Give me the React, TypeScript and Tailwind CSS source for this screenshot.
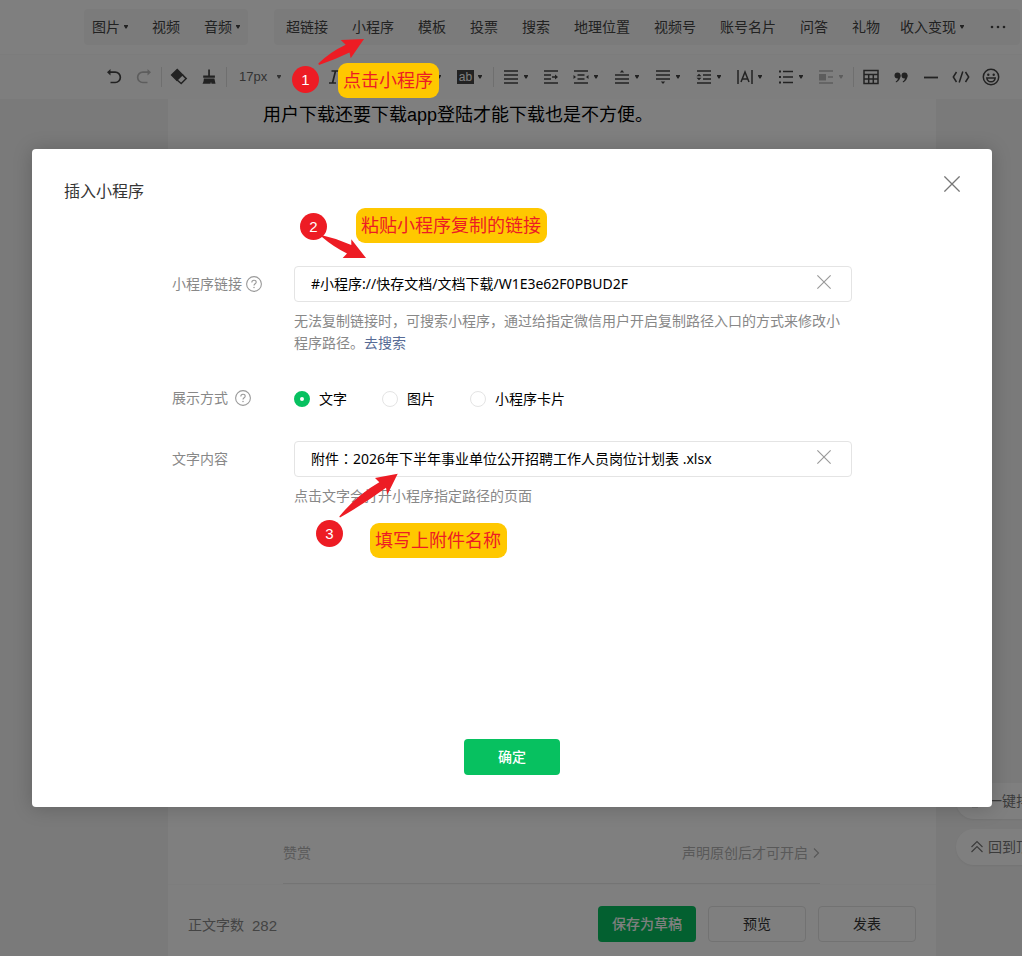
import { useState } from "react";
import type { ReactNode } from "react";

type MenuItem = { label: string; menu?: boolean };

const mediaItems: MenuItem[] = [
  { label: "图片", menu: true },
  { label: "视频" },
  { label: "音频", menu: true },
];

const insertItems: MenuItem[] = [
  { label: "超链接" },
  { label: "小程序" },
  { label: "模板" },
  { label: "投票" },
  { label: "搜索" },
  { label: "地理位置" },
  { label: "视频号" },
  { label: "账号名片" },
  { label: "问答" },
  { label: "礼物" },
  { label: "收入变现", menu: true },
];

function Caret() {
  return (
    <svg viewBox="0 0 4 4" className="h-1 w-1 shrink-0" fill="currentColor" aria-hidden="true">
      <path d="M0 0h4v1L2.500 3.500h-1L0 1z" />
    </svg>
  );
}

function MenuButton({ label, menu }: MenuItem) {
  return (
    <button
      type="button"
      className={
        menu
          ? "flex h-9 shrink-0 items-center gap-1 px-2 whitespace-nowrap"
          : "flex h-9 shrink-0 items-center px-3 whitespace-nowrap"
      }
    >
      {label}
      {menu && <Caret />}
    </button>
  );
}

function Icon({ children }: { children: ReactNode }) {
  return (
    <svg
      viewBox="0 0 18 18"
      className="h-[18px] w-[18px] shrink-0"
      fill="none"
      stroke="currentColor"
      strokeWidth="1.5"
      aria-hidden="true"
    >
      {children}
    </svg>
  );
}

function Tool({ name, muted, children }: { name: string; muted?: boolean; children: ReactNode }) {
  return (
    <button
      type="button"
      aria-label={name}
      className={
        muted
          ? "flex h-9 w-[30px] shrink-0 items-center justify-center text-[#bbbbbb]"
          : "flex h-9 w-[30px] shrink-0 items-center justify-center"
      }
    >
      <Icon>{children}</Icon>
    </button>
  );
}

function ToolMenu({
  name,
  muted,
  narrow,
  children,
}: {
  name: string;
  muted?: boolean;
  narrow?: boolean;
  children: ReactNode;
}) {
  const width = narrow ? "w-10" : "w-[41px]";
  const color = muted ? "text-[#bbbbbb]" : "";
  return (
    <button
      type="button"
      aria-label={name}
      className={`flex h-9 shrink-0 items-center gap-1 pl-1.5 ${width} ${color}`}
    >
      <Icon>{children}</Icon>
      <Caret />
    </button>
  );
}

function Separator() {
  return <span className="mx-0.5 h-5 w-px shrink-0 bg-[#dedede]" />;
}

function Cross({ className }: { className: string }) {
  return (
    <svg viewBox="0 0 16 16" className={className} fill="none" stroke="currentColor" aria-hidden="true">
      <path d="M.4.4l15.2 15.2M15.6.4L.4 15.6" strokeWidth="1.3" />
    </svg>
  );
}

function Help() {
  return (
    <button type="button" aria-label="帮助" className="text-[#9a9a9a]">
      <svg viewBox="0 0 16 16" className="h-4 w-4" fill="none" stroke="currentColor" aria-hidden="true">
        <circle cx="8" cy="8" r="7.4" strokeWidth="1.1" />
        <path d="M5.800 6.400C5.800 5 6.700 4.300 8 4.300s2.200.8 2.200 1.900c0 1.500-2.200 1.600-2.200 3.300" strokeWidth="1.100" />
        <circle cx="8" cy="11.400" r=".75" fill="currentColor" stroke="none" />
      </svg>
    </button>
  );
}

function StepBadge({ children }: { children: ReactNode }) {
  return (
    <span className="flex h-[27px] w-[27px] items-center justify-center rounded-full bg-[#ed1c24] text-[15px] leading-none text-white">
      {children}
    </span>
  );
}

function StepNote({ children }: { children: ReactNode }) {
  return (
    <span className="flex h-[35px] items-center rounded-[9px] bg-[#ffc800] pr-1.5 pl-[5px] text-lg whitespace-nowrap text-[#ed1c24]">
      {children}
    </span>
  );
}

function EditorToolbar() {
  return (
    <header className="shrink-0 bg-white text-sm text-[#444444]">
      <div className="flex h-[54px] items-center gap-[26px] pr-0.5 pl-[84px]">
        <div className="flex shrink-0 gap-1 rounded bg-[#f7f7f7]">
          {mediaItems.map((item) => (
            <MenuButton key={item.label} {...item} />
          ))}
        </div>
        <div className="flex flex-1 rounded bg-[#f7f7f7]">
          {insertItems.map((item) => (
            <MenuButton key={item.label} {...item} />
          ))}
          <button type="button" aria-label="更多" className="ml-auto flex h-9 items-center px-3.5">
            <svg viewBox="0 0 16 4" className="h-1 w-4" fill="currentColor" aria-hidden="true">
              <circle cx="2" cy="2" r="1.3" />
              <circle cx="8" cy="2" r="1.3" />
              <circle cx="14" cy="2" r="1.3" />
            </svg>
          </button>
        </div>
      </div>
      <div className="flex h-[45px] items-center border-t border-[#f8f8f8] bg-[#fdfdfd] pl-[99px]">
        <Tool name="撤销">
          <path d="M5.500 1L2 4.200l3.500 3.300z" fill="currentColor" stroke="none" />
          <path d="M4 4.200h6.200a5 5 0 010 10.300H5.500" strokeWidth="1.700" />
        </Tool>
        <Tool name="重做" muted>
          <path d="M12.500 1L16 4.200l-3.500 3.300z" fill="currentColor" stroke="none" />
          <path d="M14 4.200H7.800a5 5 0 000 10.300h4.700" strokeWidth="1.700" />
        </Tool>
        <Separator />
        <Tool name="清除格式">
          <path d="M7.200 1.500l5.200 5.200-5.600 5.600L1.600 7z" fill="currentColor" />
          <path d="M12.200 6.600l4 4-5 5-4.400-3.800" />
        </Tool>
        <Tool name="格式刷">
          <path d="M8.200 1.500h1.700V7.500h5v2.200H3.200V7.500h5z" fill="currentColor" stroke="none" />
          <path d="M3.800 10.500h10.600L15.500 15.800h-4l-.5-2-.5 2H2.500C3.500 14 3.800 12.500 3.800 10.500z" fill="currentColor" stroke="none" />
        </Tool>
        <Separator />
        <button type="button" className="flex h-9 w-[60px] shrink-0 items-center justify-between pr-2 pl-2.5 text-[13px] text-[#666666]">
          17px
          <Caret />
        </button>
        <Tool name="加粗">
          <path d="M5 3h5a3 3 0 010 6H5zM5 9h6a3 3 0 010 6H5z" strokeWidth="2" />
        </Tool>
        <Tool name="斜体">
          <path d="M6.500 3h7M4 15h7M10.500 3l-3 12" strokeWidth="1.700" />
        </Tool>
        <Tool name="下划线">
          <path d="M5 2v6a4 4 0 008 0V2M4 16h10" />
        </Tool>
        <Tool name="删除线">
          <path d="M2 9h14M13 5C12 2 5 2 5 6M5 12c1 4 8 4 8 0" />
        </Tool>
        <ToolMenu name="字体颜色">
          <path d="M4 12L9 2l5 10M6 9h6M2 16h14" />
        </ToolMenu>
        <button type="button" aria-label="背景色" className="flex h-9 w-[41px] shrink-0 items-center gap-1 pl-[7px]">
          <span className="flex h-3.5 w-[17px] items-center justify-center bg-[#444444] text-xs leading-none text-white">
            ab
          </span>
          <Caret />
        </button>
        <Separator />
        <ToolMenu name="对齐" narrow>
          <path d="M2 3h14M2 7h14M2 11h14M2 15h14" />
        </ToolMenu>
        <Tool name="首行缩进">
          <path d="M2 3h14M2 7h7M2 11h7M2 15h14M10 9h4" />
          <path d="M13 6.500L16 9l-3 2.500z" fill="currentColor" stroke="none" />
        </Tool>
        <ToolMenu name="两端缩进">
          <path d="M2 3h14M5.500 7h7M5.500 11h7M2 15h14" />
          <path d="M1.500 7L4 9l-2.500 2zM16.500 7L14 9l2.500 2z" fill="currentColor" stroke="none" />
        </ToolMenu>
        <ToolMenu name="段前距">
          <path d="M2 7h14M2 11h14M2 15h14" />
          <path d="M6.800 4.500L9 2l2.200 2.500z" fill="currentColor" stroke="none" />
        </ToolMenu>
        <ToolMenu name="段后距">
          <path d="M2 3h14M2 7h14M2 11h14" />
          <path d="M6.800 13.500L9 16l2.200-2.500z" fill="currentColor" stroke="none" />
        </ToolMenu>
        <ToolMenu name="行间距">
          <path d="M2 3h14M8 7h8M8 11h8M2 15h14" />
          <path d="M1.500 8.300L4 5.800l2.500 2.500zM1.500 9.700L4 12.200l2.500-2.500z" fill="currentColor" stroke="none" />
        </ToolMenu>
        <ToolMenu name="字间距">
          <path d="M2 2v14M16 2v14M5 14l4-10 4 10M6.300 11h5.400" />
        </ToolMenu>
        <ToolMenu name="列表" narrow>
          <path d="M6 3.500h10M6 9h10M6 14.500h10" />
          <path d="M2 3.500h2M2 9h2M2 14.500h2" strokeWidth="2" />
        </ToolMenu>
        <ToolMenu name="浮动" muted narrow>
          <path d="M2 3h14M11 9h5M2 15h14" />
          <path d="M2 6h7v6.500H2z" fill="currentColor" stroke="none" />
        </ToolMenu>
        <Separator />
        <Tool name="表格">
          <path d="M2 2.500h14v13H2zM2 6.500h14M2 11h14M6.700 6.500v9M11.300 6.500v9" />
        </Tool>
        <Tool name="引用">
          <g fill="currentColor" stroke="none">
            <circle cx="5.500" cy="7.500" r="3" />
            <circle cx="12.500" cy="7.500" r="3" />
            <path d="M8.500 7c.2 3.500-1.500 6.200-4.500 7.500l-.3-1c1.500-.8 2.500-2.500 2.300-4zM15.500 7c.2 3.500-1.500 6.200-4.500 7.500l-.3-1c1.500-.8 2.500-2.500 2.300-4z" />
          </g>
        </Tool>
        <Tool name="分隔线">
          <path d="M2 9.500h14" strokeWidth="1.800" />
        </Tool>
        <Tool name="代码">
          <path d="M4.500 4L1.300 9l3.200 5M13.500 4l3.200 5-3.200 5M10.800 3.500l-3.600 11" strokeWidth="1.500" />
        </Tool>
        <Tool name="表情">
          <circle cx="9" cy="9" r="7.700" />
          <circle cx="6.300" cy="6.700" r="1.200" fill="currentColor" stroke="none" />
          <circle cx="11.700" cy="6.700" r="1.200" fill="currentColor" stroke="none" />
          <path d="M4.800 10h8.400c-.3 2.500-2 3.800-4.200 3.800S5.100 12.500 4.800 10z" />
        </Tool>
      </div>
    </header>
  );
}

function EditorPage() {
  return (
    <div className="flex min-h-screen flex-col bg-[#f4f4f4]">
      <EditorToolbar />
      <main className="flex flex-1 pr-[86px] pl-[168px]">
        <div className="flex flex-1 flex-col bg-white">
          <p className="flex-1 px-[95px] text-lg leading-8 text-black">
            用户下载还要下载app登陆才能下载也是不方便。
          </p>
          <div className="mr-[116px] ml-[115px] flex h-[62px] items-center justify-between border-b border-[#e8e8e8] text-sm text-[#b2b2b2]">
            <span>赞赏</span>
            <button type="button" className="flex items-center gap-1">
              声明原创后才可开启
              <svg viewBox="0 0 8 12" className="h-3 w-2" fill="none" stroke="currentColor" strokeWidth="1.200" aria-hidden="true">
                <path d="M2 1.500L6.500 6 2 10.500" />
              </svg>
            </button>
          </div>
          <footer className="flex h-[72px] items-center justify-between border-t border-[#fafafa] px-5 pt-1.5 text-sm">
            <span className="flex gap-2 pt-1 text-[#888888]">
              <span>正文字数</span>
              <span className="text-[15px]">282</span>
            </span>
            <div className="flex gap-3">
              <button type="button" className="h-9 w-[98px] rounded bg-[#07c160] font-medium text-white">
                保存为草稿
              </button>
              <button type="button" className="h-9 w-[98px] rounded border border-[#e4e4e4] text-[#353535]">
                预览
              </button>
              <button type="button" className="h-9 w-[98px] rounded border border-[#e4e4e4] text-[#353535]">
                发表
              </button>
            </div>
          </footer>
        </div>
      </main>
      <aside className="absolute -right-8 bottom-[91px] flex flex-col gap-[10px] text-sm text-[#777777]">
        <button type="button" className="flex h-9 w-[98px] items-center gap-1 rounded-full bg-white pl-3.5 whitespace-nowrap shadow-xs">
          <svg viewBox="0 0 14 14" className="h-3.5 w-3.5 shrink-0" fill="none" stroke="currentColor" strokeWidth="1.300" aria-hidden="true">
            <path d="M2 2h10M2 6h10M2 12.500h6" />
          </svg>
          一键排版
        </button>
        <button type="button" className="flex h-9 w-[98px] items-center gap-1 rounded-full bg-white pl-3.5 whitespace-nowrap shadow-xs">
          <svg viewBox="0 0 14 14" className="h-3.5 w-3.5 shrink-0" fill="none" stroke="currentColor" strokeWidth="1.200" aria-hidden="true">
            <path d="M1.500 7L7 1.500 12.500 7M1.500 12L7 6.500l5.500 5.500" />
          </svg>
          回到顶部
        </button>
      </aside>
    </div>
  );
}

function Steps() {
  return (
    <>
      <div className="absolute top-[-83px] left-[260px]">
        <StepBadge>1</StepBadge>
      </div>
      <div className="absolute top-[-86px] left-[306px]">
        <StepNote>点击小程序</StepNote>
      </div>
      <svg viewBox="0 0 48 28" className="pointer-events-none absolute top-[-111px] left-[285px] h-7 w-12" fill="#ed1c24" aria-hidden="true">
        <path d="M1.300 25.500Q13 14 28.700 6.700L23.700 2 47 1 33.700 20.300 32.500 14.500Q17 22 2 27z" />
      </svg>

      <div className="absolute top-[64px] left-[268px]">
        <StepBadge>2</StepBadge>
      </div>
      <div className="absolute top-[59px] left-[324px]">
        <StepNote>粘贴小程序复制的链接</StepNote>
      </div>
      <svg viewBox="0 0 48 28" className="pointer-events-none absolute top-[84px] left-[288px] h-7 w-12" fill="#ed1c24" aria-hidden="true">
        <path d="M2 2.300Q17 5.500 31.300 12V6.300L46 25H22.700L27 20.500Q13 13.500 2 4z" />
      </svg>

      <div className="absolute top-[371px] left-[284px]">
        <StepBadge>3</StepBadge>
      </div>
      <div className="absolute top-[374px] left-[338px]">
        <StepNote>填写上附件名称</StepNote>
      </div>
      <svg viewBox="0 0 64 48" className="pointer-events-none absolute top-[322px] left-[306px] h-12 w-16" fill="#ed1c24" aria-hidden="true">
        <path d="M1.300 45.500Q19 24 41.300 11.300L37 7 59.700 2.700 49.300 23.700 48 16.800Q26 33 2 46.500z" />
      </svg>
    </>
  );
}

const displayModes = ["文字", "图片", "小程序卡片"];

export default function App() {
  const [link, setLink] = useState("#小程序://快存文档/文档下载/W1E3e62F0PBUD2F");
  const [content, setContent] = useState("附件：2026年下半年事业单位公开招聘工作人员岗位计划表 .xlsx");
  const [mode, setMode] = useState("文字");

  return (
    <div className="relative min-h-screen overflow-hidden font-['Liberation_Sans','Noto_Sans_CJK_SC',sans-serif]">
      <EditorPage />
      <div className="absolute inset-0 flex items-start justify-center bg-black/50 pt-[149px] pr-[30px] pl-8">
        <section
          role="dialog"
          aria-modal="true"
          aria-labelledby="dialog-title"
          className="relative flex min-h-[658px] w-full max-w-[960px] flex-col rounded bg-white pb-8 shadow-[0_1px_20px_0_rgba(0,0,0,0.2)]"
        >
          <div className="flex items-start justify-between px-8 pt-[27px] pb-[62px]">
            <h1 id="dialog-title" className="pt-1 text-base leading-6 text-[#353535]">
              插入小程序
            </h1>
            <button type="button" aria-label="关闭" className="text-[#777777]">
              <Cross className="h-4 w-4" />
            </button>
          </div>

          <form className="flex flex-1 flex-col gap-8 px-[140px] text-sm" onSubmit={(e) => e.preventDefault()}>
            <div className="flex">
              <div className="flex h-9 w-[122px] shrink-0 items-center gap-1 text-[#888888]">
                <label htmlFor="link">小程序链接</label>
                <Help />
              </div>
              <div className="flex-1">
                <div className="flex h-9 items-center rounded border border-[#e4e4e4] pr-5 pl-4">
                  <input
                    id="link"
                    value={link}
                    onChange={(e) => setLink(e.target.value)}
                    className="min-w-0 flex-1 font-['Noto_Sans','Noto_Sans_CJK_SC',sans-serif] text-black outline-none"
                  />
                  <button type="button" aria-label="清空链接" className="pb-1 text-[#999999]" onClick={() => setLink("")}>
                    <Cross className="h-3.5 w-3.5" />
                  </button>
                </div>
                <p className="mt-2 leading-[22px] text-[#888888]">
                  无法复制链接时，可搜索小程序，通过给指定微信用户开启复制路径入口的方式来修改小程序路径。
                  <a href="#search" className="text-[#576b95]">去搜索</a>
                </p>
              </div>
            </div>

            <div className="flex h-[23px] items-center" role="radiogroup" aria-labelledby="mode-label">
              <div className="flex w-[122px] shrink-0 items-center gap-[7px] text-[#888888]">
                <span id="mode-label">展示方式</span>
                <Help />
              </div>
              <div className="flex items-center gap-[35px] pt-0.5 text-black">
                {displayModes.map((item) => (
                  <label key={item} className="flex items-center gap-[9px]">
                    <input
                      type="radio"
                      name="mode"
                      value={item}
                      checked={mode === item}
                      onChange={() => setMode(item)}
                      className="h-4 w-4 appearance-none rounded-full border border-[#e4e4e4] bg-white checked:border-[6px] checked:border-[#07c160]"
                    />
                    {item}
                  </label>
                ))}
              </div>
            </div>

            <div className="flex">
              <label htmlFor="content" className="flex h-9 w-[122px] shrink-0 items-center text-[#888888]">
                文字内容
              </label>
              <div className="flex-1">
                <div className="flex h-9 items-center rounded border border-[#e4e4e4] pr-5 pl-4">
                  <input
                    id="content"
                    value={content}
                    onChange={(e) => setContent(e.target.value)}
                    className="min-w-0 flex-1 font-['Noto_Sans','Noto_Sans_CJK_JP',sans-serif] text-black outline-none"
                  />
                  <button type="button" aria-label="清空文字" className="pb-1 text-[#999999]" onClick={() => setContent("")}>
                    <Cross className="h-3.5 w-3.5" />
                  </button>
                </div>
                <p className="mt-2 leading-[22px] text-[#888888]">点击文字会打开小程序指定路径的页面</p>
              </div>
            </div>

            <button type="submit" className="mt-auto h-9 w-24 self-center rounded bg-[#07c160] font-medium text-white">
              确定
            </button>
          </form>

          <Steps />
        </section>
      </div>
    </div>
  );
}
